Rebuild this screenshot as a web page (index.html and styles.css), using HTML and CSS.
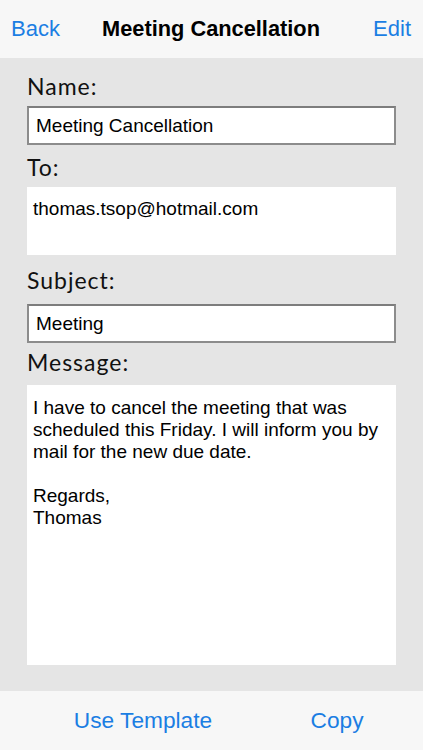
FILE: index.html
```html
<!DOCTYPE html>
<html>
<head>
<meta charset="utf-8">
<link rel="stylesheet" href="styles.css">
</head>
<body>
<div class="screen">
  <header class="navbar">
    <span class="nav-btn nav-left">Back</span>
    <span class="nav-title">Meeting Cancellation</span>
    <span class="nav-btn nav-right">Edit</span>
  </header>
  <main class="form">
    <div class="label label-name">Name:</div>
    <div class="input">Meeting Cancellation</div>
    <div class="label label-to">To:</div>
    <div class="box box-to">thomas.tsop@hotmail.com</div>
    <div class="label label-subject">Subject:</div>
    <div class="input">Meeting</div>
    <div class="label label-message">Message:</div>
    <div class="box box-message">I have to cancel the meeting that was scheduled this Friday. I will inform you by mail for the new due date.<br><br>Regards,<br>Thomas</div>
  </main>
  <footer class="toolbar">
    <span class="tool-btn">Use Template</span>
    <span class="tool-btn">Copy</span>
  </footer>
</div>
</body>
</html>
```

FILE: styles.css
```css
html, body {
  margin: 0;
  padding: 0;
}
body {
  font-family: "Liberation Sans", Arial, sans-serif;
  background: #e5e5e5;
}
.screen {
  width: 423px;
  height: 750px;
  display: flex;
  flex-direction: column;
}
.navbar {
  height: 58px;
  background: #f7f7f7;
  display: grid;
  grid-template-columns: 1fr auto 1fr;
  align-items: center;
  padding: 0 12px 0 11px;
  box-sizing: border-box;
}
.nav-btn {
  color: #1b7ee3;
  font-size: 22px;
}
.nav-left { justify-self: start; }
.nav-right { justify-self: end; }
.nav-title {
  font-weight: bold;
  font-size: 21.8px;
  color: #000;
}
.form {
  flex: 1;
  background: #e5e5e5;
  padding: 14px 27px 0 27px;
  display: flex;
  flex-direction: column;
}
.label {
  font-family: "Lato", "DejaVu Sans", sans-serif;
  font-size: 23px;
  letter-spacing: 1px;
  color: #111;
  line-height: 28px;
}
.label-name { margin-bottom: 6px; }
.label-to { margin-top: 8px; margin-bottom: 6px; }
.label-subject { margin-top: 11px; margin-bottom: 10px; }
.label-message { margin-top: 5px; margin-bottom: 9px; }
.input {
  height: 39px;
  box-sizing: border-box;
  background: #fff;
  border: 2px solid #8c8c8c;
  border-top-color: #7d7d7d;
  padding: 0 7px;
  display: flex;
  align-items: center;
  font-size: 19px;
  color: #000;
}
.box {
  background: #fff;
  font-size: 19px;
  line-height: 22px;
  color: #000;
  padding: 11px 6px;
  box-sizing: border-box;
}
.box-to {
  height: 68px;
}
.box-message {
  height: 280px;
  padding-top: 12px;
}
.toolbar {
  height: 59px;
  background: #f7f7f7;
  display: flex;
  align-items: center;
  box-sizing: border-box;
}
.tool-btn {
  color: #1b7ee3;
  font-size: 22.7px;
  flex: 1;
  text-align: center;
}
.tool-btn:first-child {
  flex: 0 0 286px;
}
.tool-btn:last-child {
  flex: 0 0 102px;
}
```
